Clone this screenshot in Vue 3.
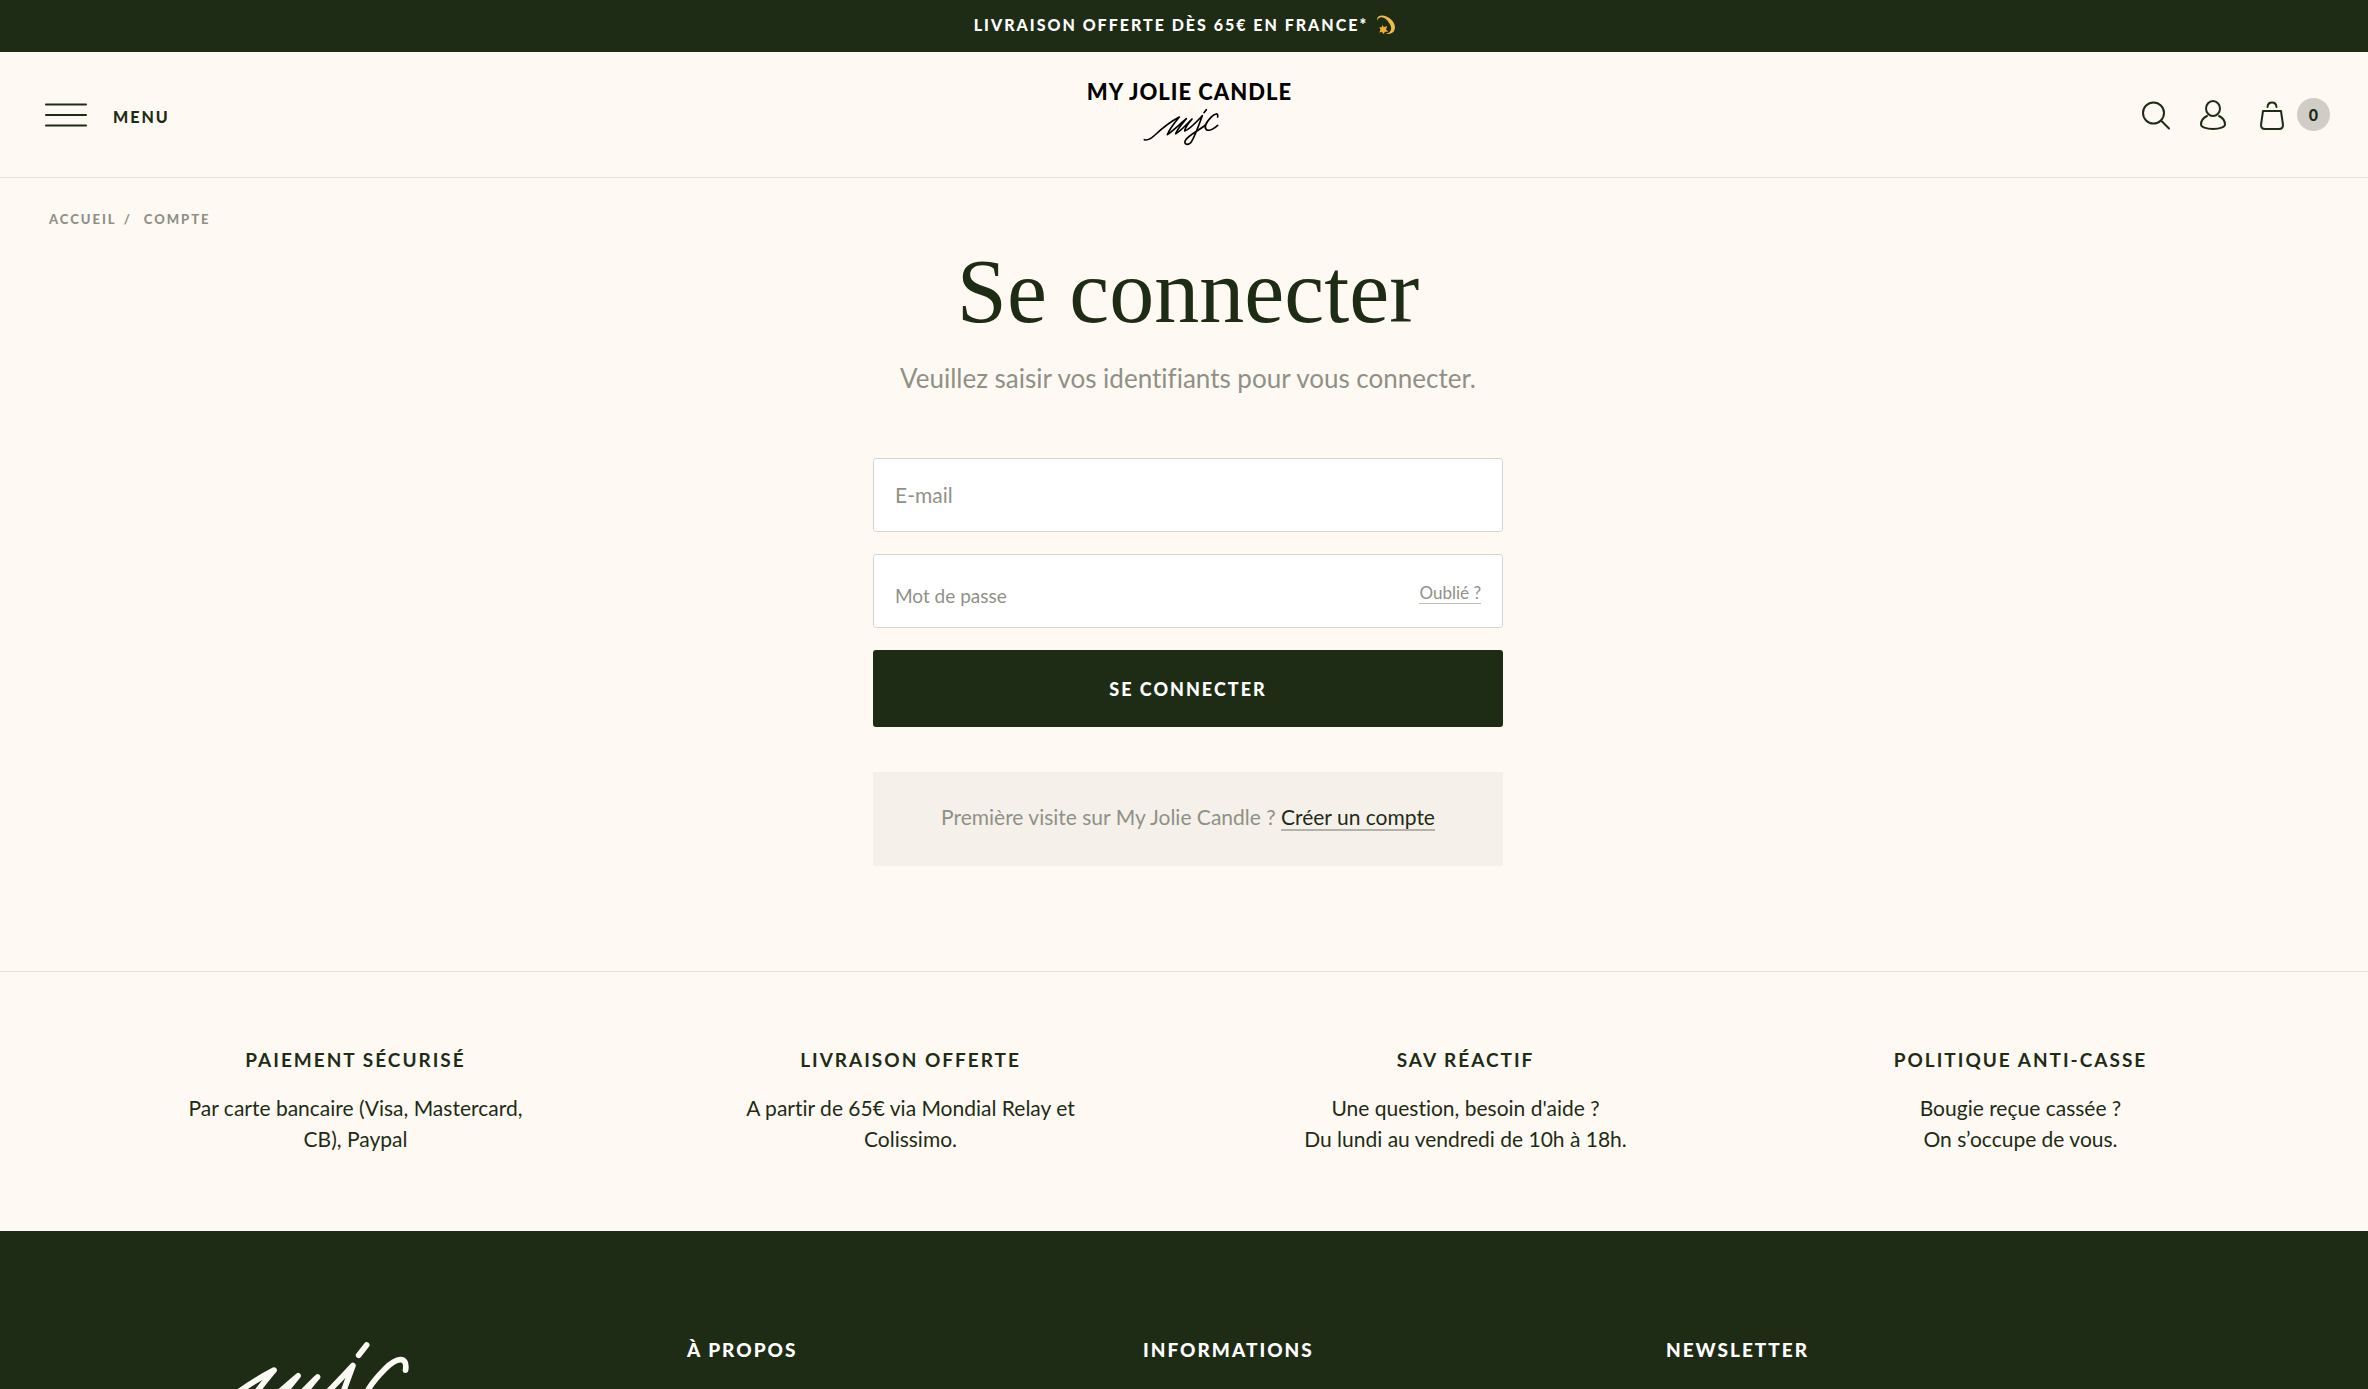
<script setup>
import { ref } from 'vue'

const email = ref('')
const password = ref('')
const cartCount = ref(0)

const services = [
  { title: 'Paiement sécurisé', lines: ['Par carte bancaire (Visa, Mastercard, CB), Paypal'] },
  { title: 'Livraison offerte', lines: ['A partir de 65€ via Mondial Relay et Colissimo.'] },
  { title: 'SAV réactif', lines: ["Une question, besoin d'aide ?", 'Du lundi au vendredi de 10h à 18h.'] },
  { title: 'Politique anti-casse', lines: ['Bougie reçue cassée ?', 'On s’occupe de vous.'] }
]

// Shared by the header and footer signatures
const signature = [
  'M28 116C38 120 48 113 60 102C82 81 108 61 133 48C120 64 103 84 97 101C116 88 138 66 154 53C143 67 127 84 122 98C140 88 156 68 171 54C161 66 149 80 149 90C164 86 187 60 202 44C194 66 180 104 170 121C162 134 147 132 150 121C156 104 188 92 211 72',
  'M248 48C250 35 240 37 230 47C214 63 206 78 214 86C223 91 238 82 248 73',
  'M214 26L207 35'
]
</script>

<template>
  <div class="page">
    <div class="banner">
      <span>Livraison offerte dès 65€ en France*</span>
      <svg class="banner-icon" viewBox="0 0 18 18" aria-hidden="true">
        <path d="M1 5C0 -1 9 -1 14.500 5C19.500 11 17 18 8.500 17C14 16 15 12 12 7.500C9 2 3 0 1 5Z" fill="#f0bd4c" />
        <path d="M6 9L7 11L10 10L9 13L11 15L8 15L7 17L5 15L3 16L4 13L3 11L5 11Z" fill="#f6ad32" />
      </svg>
    </div>

    <header class="header">
      <button class="menu-btn" type="button">
        <svg class="menu-icon" viewBox="0 0 42 26" aria-hidden="true">
          <path d="M1 2.5H41M1 13H41M1 23.5H41" />
        </svg>
        <span>Menu</span>
      </button>

      <a class="brand" href="#">
        <span class="brand-name">My Jolie Candle</span>
        <svg class="brand-sign" viewBox="0 0 300 150" aria-hidden="true">
          <path v-for="d in signature" :key="d" :d="d" />
        </svg>
      </a>

      <nav class="actions">
        <button class="icon-btn" type="button" aria-label="Rechercher">
          <svg viewBox="0 0 30 32"><circle cx="12.5" cy="14" r="10.5" /><path d="M20 21.5L28 29.5" /></svg>
        </button>
        <a class="icon-btn" href="#" aria-label="Compte">
          <svg viewBox="0 0 30 32">
            <ellipse cx="14" cy="9.5" rx="7" ry="7.5" />
            <path d="M8 17C4 19 2 22 2 25.5C2 28 7 30 14 30S26 28 26 25.5C26 22 24 19 20 17" />
          </svg>
        </a>
        <a class="icon-btn cart" href="#" aria-label="Panier">
          <svg viewBox="0 0 30 32">
            <path d="M6 12H24L26 26Q26 30 22 30H8Q4 30 4 26Z" />
            <path d="M10.500 8C11 2 19 2 19.500 8" />
          </svg>
          <span class="cart-count">{{ cartCount }}</span>
        </a>
      </nav>
    </header>

    <main class="main">
      <nav class="breadcrumb">
        <a href="#">Accueil</a><span class="breadcrumb-sep">/</span><a href="#">Compte</a>
      </nav>

      <section class="login">
        <h1 class="login-title">Se connecter</h1>
        <p class="login-intro">Veuillez saisir vos identifiants pour vous connecter.</p>

        <form class="login-form" @submit.prevent>
          <input v-model="email" class="field" type="email" placeholder="E-mail" aria-label="E-mail" />
          <div class="field-wrap">
            <input v-model="password" class="field field--password" type="password" placeholder="Mot de passe" aria-label="Mot de passe" />
            <a class="forgot" href="#">Oublié ?</a>
          </div>
          <button class="submit" type="submit">Se connecter</button>
        </form>

        <p class="signup">Première visite sur My Jolie Candle ? <a href="#">Créer un compte</a></p>
      </section>
    </main>

    <section class="services">
      <article v-for="service in services" :key="service.title" class="service">
        <h2 class="service-title">{{ service.title }}</h2>
        <p v-for="line in service.lines" :key="line" class="service-text">{{ line }}</p>
      </article>
    </section>

    <footer class="footer">
      <svg class="footer-sign" viewBox="0 0 300 150" aria-hidden="true">
        <path v-for="d in signature" :key="d" :d="d" />
      </svg>
      <h2 class="footer-title">À propos</h2>
      <h2 class="footer-title">Informations</h2>
      <h2 class="footer-title">Newsletter</h2>
    </footer>
  </div>
</template>

<style>
html,
body {
  overflow: hidden;
}
</style>

<style scoped>
.page {
  --green: #1e2c16;
  --cream: #fef9f3;
  --muted: #8f9187;
  --line: #e5e2dc;
  display: flex;
  flex-direction: column;
  height: 100vh;
  margin-right: -8px;
  overflow: hidden;
  background: var(--cream);
  color: var(--green);
  font-family: Lato, 'Liberation Sans', sans-serif;
  font-size: 21px;
  font-variant-ligatures: none;
}

.page * {
  box-sizing: border-box;
}

a {
  color: inherit;
  text-decoration: none;
}

button {
  border: 0;
  background: none;
  color: inherit;
  cursor: pointer;
  font-family: inherit;
}

h1,
h2,
p {
  margin: 0;
}

/* ── Banner ── */
.banner {
  display: flex;
  flex-shrink: 0;
  align-items: center;
  justify-content: center;
  gap: 8px;
  height: 52px;
  padding: 0 6px 3px 0;
  background: var(--green);
  color: #fff;
  font-size: 16px;
  font-weight: 900;
  letter-spacing: 2px;
  text-transform: uppercase;
}

.banner-icon {
  width: 20px;
  height: 20px;
}

/* ── Header ── */
.header {
  display: grid;
  flex-shrink: 0;
  grid-template-columns: 1fr auto 1fr;
  align-items: center;
  height: 126px;
  padding: 0 46px 0 45px;
  border-bottom: 1px solid var(--line);
}

.header svg {
  fill: none;
  stroke: currentColor;
  stroke-linecap: round;
  stroke-linejoin: round;
  stroke-width: 2;
}

.menu-btn {
  display: flex;
  align-items: center;
  justify-self: start;
  gap: 26px;
  padding: 0;
  font-size: 16px;
  font-weight: 900;
  letter-spacing: 2px;
  text-transform: uppercase;
}

.menu-btn span {
  padding-top: 4px;
}

.menu-icon {
  width: 42px;
  height: 26px;
}

.brand {
  display: flex;
  flex-direction: column;
  align-items: center;
  padding: 2px 0 0 4px;
  color: #000;
}

.brand-name {
  font-size: 22px;
  font-weight: 900;
  letter-spacing: 1px;
  line-height: 22px;
  text-transform: uppercase;
}

.header .brand-sign {
  width: 100px;
  height: 50px;
  margin: -2px 8px 0 0;
  stroke-width: 5;
}

.actions {
  display: flex;
  align-items: center;
  justify-self: end;
  gap: 28px;
}

.icon-btn {
  display: flex;
  align-items: center;
  padding: 0;
}

.icon-btn svg {
  width: 30px;
  height: 32px;
}

.cart {
  gap: 10px;
}

.cart-count {
  display: grid;
  place-items: center;
  width: 33px;
  height: 33px;
  border-radius: 50%;
  background: #d0cdc7;
  font-size: 16px;
  font-weight: 900;
}

/* ── Login ── */
.main {
  flex-shrink: 0;
  padding: 30px 49px 105px;
}

.breadcrumb {
  display: flex;
  color: var(--muted);
  font-size: 13px;
  font-weight: 900;
  letter-spacing: 2px;
  line-height: 22px;
  text-transform: uppercase;
}

.breadcrumb-sep {
  margin: 0 12px 0 7px;
}

.login {
  display: flex;
  flex-direction: column;
  align-items: center;
  max-width: 630px;
  margin: 0 auto;
}

.login-title {
  margin-top: 12px;
  font-family: 'Liberation Serif', serif;
  font-size: 90px;
  font-weight: 400;
  line-height: 100px;
}

.login-intro {
  margin: 18px 0 62px;
  color: var(--muted);
  font-size: 26px;
  line-height: 36px;
  white-space: nowrap;
}

.login-form {
  display: flex;
  flex-direction: column;
  gap: 22px;
  width: 100%;
}

.field-wrap {
  position: relative;
}

.field {
  display: block;
  width: 100%;
  height: 74px;
  padding: 0 21px 2px;
  border: 1px solid #d3d6cf;
  border-radius: 3px;
  background: #fff;
  color: var(--green);
  font-family: inherit;
  font-size: 21px;
}

.field--password {
  padding-top: 10px;
  font-size: 19px;
}

.field::placeholder {
  color: var(--muted);
  opacity: 1;
}

.forgot {
  position: absolute;
  top: 29px;
  right: 22px;
  border-bottom: 1px solid #c0c1bb;
  color: var(--muted);
  font-size: 17px;
  line-height: 20px;
}

.submit {
  height: 77px;
  border-radius: 3px;
  background: var(--green);
  color: #fff;
  font-size: 18px;
  font-weight: 900;
  letter-spacing: 2px;
  text-transform: uppercase;
}

.signup {
  width: 100%;
  margin-top: 45px;
  padding: 30px 20px 34px;
  background: #f5f0ea;
  color: var(--muted);
  line-height: 30px;
  text-align: center;
}

.signup a {
  border-bottom: 2px solid #b3b2aa;
  color: var(--green);
  line-height: 24px;
}

/* ── Services ── */
.services {
  display: grid;
  flex-shrink: 0;
  grid-template-columns: repeat(4, 1fr);
  padding: 73px 78px 77px;
  border-top: 1px solid var(--line);
}

.service {
  padding: 0 96px;
  text-align: center;
}

.service-title {
  margin-bottom: 17px;
  font-size: 19px;
  font-weight: 700;
  letter-spacing: 2px;
  line-height: 30px;
  text-transform: uppercase;
  white-space: nowrap;
}

.service-text {
  line-height: 31px;
}

/* ── Footer ── */
.footer {
  display: grid;
  flex: 1;
  grid-template-columns: 565fr 456fr 523fr 710fr;
  align-items: start;
  min-height: 0;
  padding: 84px 0 0 122px;
  overflow: hidden;
  background: var(--green);
  color: #fff;
}

.footer-sign {
  width: 343px;
  height: 172px;
  fill: none;
  stroke: #fbfaf4;
  stroke-linecap: round;
  stroke-linejoin: round;
  stroke-width: 5;
}

.footer-title {
  padding-top: 20px;
  font-size: 19px;
  font-weight: 900;
  letter-spacing: 2px;
  line-height: 30px;
  text-transform: uppercase;
}
</style>
